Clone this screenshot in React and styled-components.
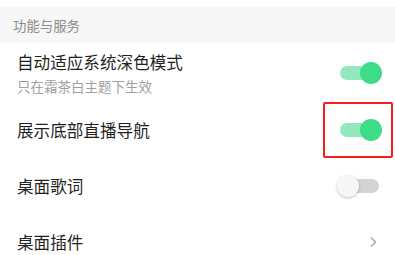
import React from "react";
import styled, { createGlobalStyle } from "styled-components";

const Global = createGlobalStyle`
  html, body {
    margin: 0;
    padding: 0;
    background: #fff;
    font-family: "Noto Sans CJK SC", "Noto Sans", sans-serif;
  }
`;

const Page = styled.div`
  width: 395px;
  height: 255px;
  overflow: hidden;
  padding-top: 7px;
  box-sizing: border-box;
`;

const SectionHeader = styled.div`
  height: 36px;
  background: #f7f7f7;
  display: flex;
  align-items: center;
  padding-left: 13px;
  font-size: 13.4px;
  color: #8a8a8a;
`;

const Row = styled.div`
  height: ${(p) => p.h || 56}px;
  display: flex;
  align-items: center;
  justify-content: space-between;
  padding: 0 13px 0 17px;
  position: relative;
`;

const Texts = styled.div`
  display: flex;
  flex-direction: column;
  gap: 4px;
  padding-top: 2px;
`;

const Title = styled.div`
  font-size: 16.6px;
  color: #1f1f1f;
  line-height: 21px;
`;

const Sub = styled.div`
  font-size: 13.5px;
  color: #a0a0a0;
  line-height: 18px;
`;

const Track = styled.div`
  width: 38px;
  height: 14px;
  border-radius: 7px;
  background: ${(p) => (p.on ? "#92e9bd" : "#d4d4d4")};
  position: relative;
  margin-right: ${(p) => (p.on ? 4 : 3)}px;
`;

const Knob = styled.div`
  position: absolute;
  top: -4px;
  ${(p) => (p.on ? "right: -4px;" : "left: -4px;")}
  width: 22px;
  height: 22px;
  border-radius: 50%;
  background: ${(p) => (p.on ? "#3ddc86" : "#f7f7f7")};
  box-shadow: ${(p) => (p.on ? "none" : "0 1px 3px rgba(0,0,0,0.25)")};
`;

const Highlight = styled.div`
  position: absolute;
  left: 323px;
  top: 0;
  width: 66px;
  height: 52px;
  border: 2.5px solid #f5201c;
  border-radius: 2px;
`;

const Chevron = styled.svg`
  width: 8px;
  height: 12px;
  margin-right: 5px;
`;

function Toggle({ on }) {
  return (
    <Track on={on ? 1 : 0}>
      <Knob on={on ? 1 : 0} />
    </Track>
  );
}

export default function App() {
  return (
    <Page>
      <Global />
      <SectionHeader>功能与服务</SectionHeader>
      <Row h={59}>
        <Texts>
          <Title>自动适应系统深色模式</Title>
          <Sub>只在霜茶白主题下生效</Sub>
        </Texts>
        <Toggle on />
      </Row>
      <Row>
        <Title>展示底部直播导航</Title>
        <Toggle on />
        <Highlight />
      </Row>
      <Row>
        <Title>桌面歌词</Title>
        <Toggle />
      </Row>
      <Row>
        <Title>桌面插件</Title>
        <Chevron viewBox="0 0 8 12">
          <path d="M2 1.5 L6.5 6 L2 10.5" fill="none" stroke="#a8a8a8" strokeWidth="1.5" />
        </Chevron>
      </Row>
    </Page>
  );
}
